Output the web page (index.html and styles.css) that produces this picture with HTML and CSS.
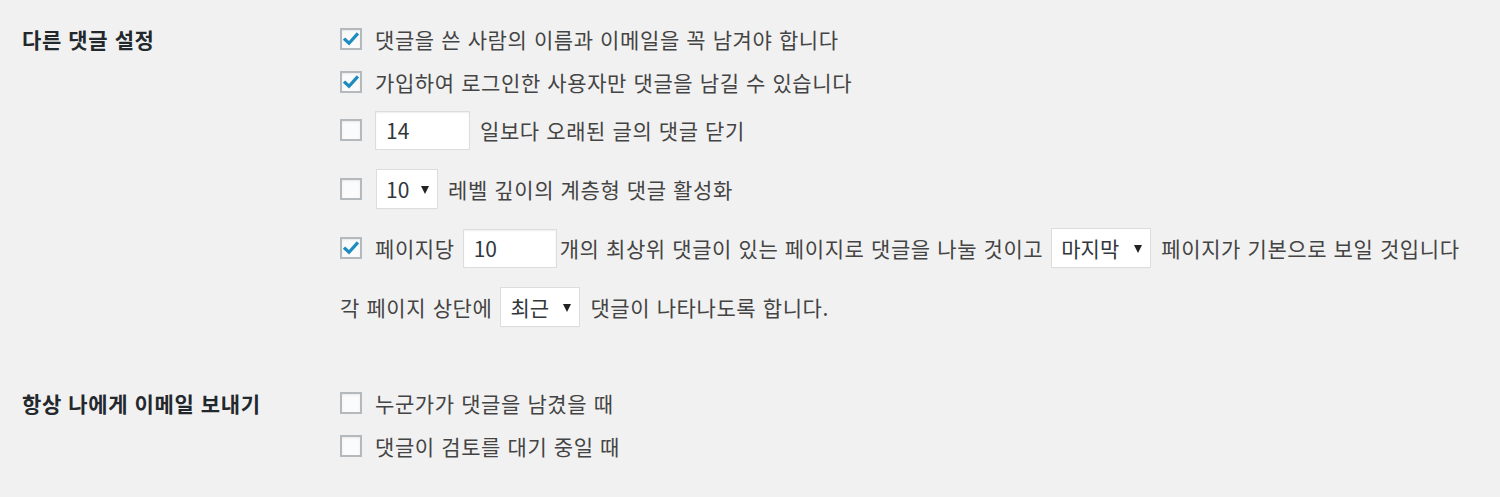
FILE: index.html
```html
<!DOCTYPE html>
<html lang="ko">
<head>
<meta charset="utf-8">
<title>토론 설정</title>
<link rel="stylesheet" href="styles.css">
</head>
<body>
<form class="settings">
  <section class="setting first">
    <h3 class="setting-title">다른 댓글 설정</h3>
    <div class="options">
      <label class="row"><span class="box checked"><svg viewBox="0 0 20 20"><path d="M3.5 10.2 L7.8 14.2 L16.5 4.6" /></svg></span>댓글을 쓴 사람의 이름과 이메일을 꼭 남겨야 합니다</label>
      <label class="row"><span class="box checked"><svg viewBox="0 0 20 20"><path d="M3.5 10.2 L7.8 14.2 L16.5 4.6" /></svg></span>가입하여 로그인한 사용자만 댓글을 남길 수 있습니다</label>
      <div class="row ctl"><span class="box"></span><input class="field w-days" type="text" value="14"><span class="after">일보다 오래된 글의 댓글 닫기</span></div>
      <div class="row ctl gap-lg"><span class="box"></span><span class="select w-depth">10</span><span class="after">레벨 깊이의 계층형 댓글 활성화</span></div>
      <div class="row ctl gap-lg"><span class="box checked"><svg viewBox="0 0 20 20"><path d="M3.5 10.2 L7.8 14.2 L16.5 4.6" /></svg></span><span>페이지당</span><input class="field w-per" type="text" value="10"><span class="mid">개의 최상위 댓글이 있는 페이지로 댓글을 나눌 것이고</span><span class="select w-last">마지막</span><span class="after">페이지가 기본으로 보일 것입니다</span></div>
      <div class="row ctl gap-lg"><span>각 페이지 상단에</span><span class="select w-order">최근</span><span class="after">댓글이 나타나도록 합니다.</span></div>
    </div>
  </section>
  <section class="setting second">
    <h3 class="setting-title">항상 나에게 이메일 보내기</h3>
    <div class="options">
      <label class="row"><span class="box"></span>누군가가 댓글을 남겼을 때</label>
      <label class="row"><span class="box"></span>댓글이 검토를 대기 중일 때</label>
    </div>
  </section>
</form>
</body>
</html>
```

FILE: styles.css
```css
html, body {
  margin: 0;
  padding: 0;
  background: #f1f1f1;
}

body {
  font-family: "Noto Sans CJK KR", "Noto Sans", sans-serif;
  font-size: 21px;
  letter-spacing: 0.6px;
  color: #444;
  width: 1500px;
  height: 497px;
  overflow: hidden;
}

.settings {
  display: flex;
  flex-direction: column;
}

.setting {
  display: grid;
  grid-template-columns: 318px 1fr;
  padding-left: 22px;
}

.setting.first {
  padding-top: 24px;
}

.setting.second {
  padding-top: 61px;
}

.setting-title {
  margin: 0;
  height: 30px;
  line-height: 30px;
  font-size: 21px;
  font-weight: 700;
  color: #23282d;
}

.options {
  display: flex;
  flex-direction: column;
}

.row {
  display: flex;
  align-items: center;
  height: 30px;
  line-height: 30px;
  white-space: nowrap;
}

.row + .row {
  margin-top: 13px;
}

.row.ctl {
  height: 40px;
}

.row.gap-lg {
  margin-top: 19px;
}

.box {
  flex: none;
  box-sizing: border-box;
  width: 22px;
  height: 22px;
  margin-right: 13px;
  background: #fbfbfb;
  border: 2px solid #b4b9be;
  box-shadow: inset 0 1px 2px rgba(0, 0, 0, 0.08);
  display: flex;
  align-items: center;
  justify-content: center;
}

.box svg {
  width: 19px;
  height: 19px;
}

.box svg path {
  fill: none;
  stroke: #1e8cbe;
  stroke-width: 3.6;
  stroke-linecap: square;
  stroke-linejoin: miter;
}

.field {
  box-sizing: border-box;
  height: 39px;
  border: 1px solid #dddddd;
  background: #fff;
  box-shadow: inset 0 1px 2px rgba(0, 0, 0, 0.07);
  font: inherit;
  letter-spacing: 0;
  color: #32373c;
  padding: 0 10px;
  margin: 0;
  outline: none;
}

.w-days { width: 95px; }
.w-per { width: 94px; margin-left: 8px; }

.select {
  position: relative;
  box-sizing: border-box;
  height: 40px;
  line-height: 38px;
  border: 1px solid #dddddd;
  background: #fff;
  color: #32373c;
  padding: 0 0 0 9px;
  letter-spacing: 0;
  box-shadow: 0 1px 1px -1px rgba(0, 0, 0, 0.1);
}

.select::after {
  content: "";
  position: absolute;
  right: 8px;
  top: 16px;
  border-left: 4px solid transparent;
  border-right: 4px solid transparent;
  border-top: 8px solid #222;
}

.w-depth { width: 62px; margin-left: 1px; }
.w-last { width: 100px; margin-left: 8px; }
.w-order { width: 80px; margin-left: 8px; }

.after {
  margin-left: 10px;
}

.mid {
  margin-left: 3px;
}
```
